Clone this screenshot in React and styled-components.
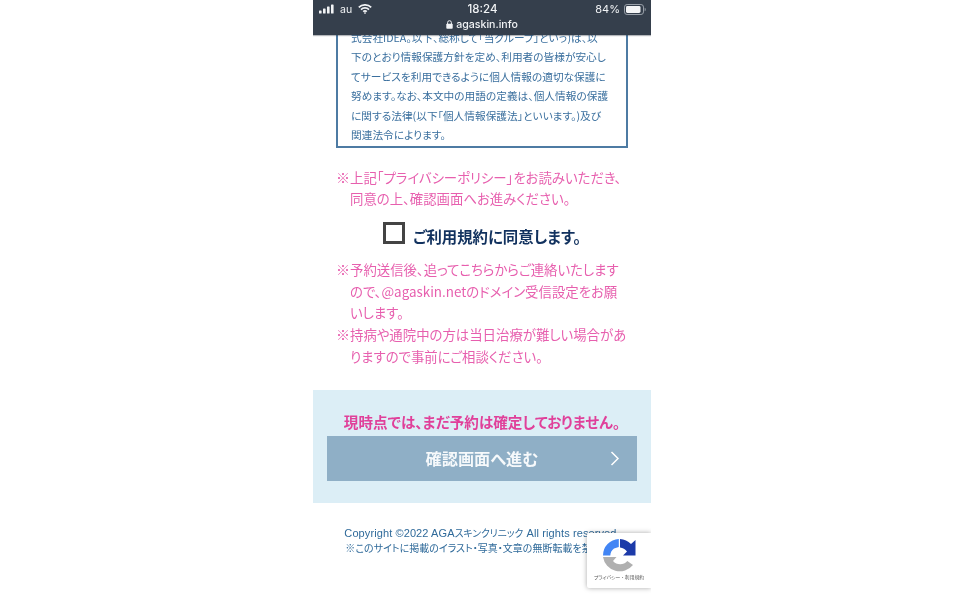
import React from "react";
import styled, { createGlobalStyle } from "styled-components";

const GlobalStyle = createGlobalStyle`
  html, body {
    margin: 0;
    padding: 0;
    background: #fff;
  }
  body {
    font-family: "Noto Sans CJK JP", "Liberation Sans", sans-serif;
  }
`;

const Page = styled.div`
  display: flex;
  justify-content: center;
  height: 600px;
  overflow: hidden;
`;

const Phone = styled.div`
  position: relative;
  width: 338px;
  height: 600px;
  overflow: hidden;
  background: #fff;
  filter: blur(0.3px);
  font-feature-settings: "palt";
`;

const StatusBar = styled.div`
  position: absolute;
  top: 0;
  left: 0;
  right: 0;
  height: 35px;
  background: #353f4c;
  color: #f1f3f5;
  font-family: "Inter", "Liberation Sans", sans-serif;
  box-shadow: 0 1px 1px rgba(40, 50, 60, 0.35);
`;

const StatusTop = styled.div`
  display: grid;
  grid-template-columns: 1fr auto 1fr;
  align-items: center;
  height: 18px;
  padding: 0 5px 0 6px;
`;

const StatusLeft = styled.div`
  display: flex;
  align-items: center;
  gap: 6px;
  font-size: 10.5px;
`;

const StatusRight = styled.div`
  display: flex;
  align-items: center;
  justify-content: flex-end;
  gap: 4px;
  font-size: 11px;
`;

const Clock = styled.div`
  font-size: 11.5px;
  font-weight: 500;
`;

const Address = styled.div`
  display: flex;
  align-items: center;
  justify-content: center;
  gap: 3px;
  height: 12px;
  font-size: 10.6px;
  font-weight: 500;
`;

const PolicyBox = styled.div`
  margin: 0 23px 0;
  height: 148px;
  box-sizing: border-box;
  padding: 27.5px 0 0 13px;
  border: 2px solid #4d7ba3;
  border-top: none;
  color: #3a6f9e;
  font-size: 10.7px;
  line-height: 19.5px;
  white-space: nowrap;
`;

const Notes = styled.div`
  margin: ${(props) => props.$top}px 0 0 23px;
  color: #e75fae;
  font-size: 13.4px;
  line-height: ${(props) => props.$line}px;
  white-space: nowrap;
`;

const Note = styled.div`
  display: flex;
`;

const Mark = styled.span`
  flex: none;
  width: 14px;
  font-size: 14px;
  font-feature-settings: normal;
`;

const AgreeRow = styled.label`
  display: flex;
  align-items: center;
  justify-content: center;
  gap: 8px;
  margin-top: 16px;
  height: 22px;
  color: #12325f;
  font-size: 15.4px;
  font-weight: 700;
`;

const CheckBox = styled.span`
  flex: none;
  align-self: flex-start;
  width: 22px;
  height: 22px;
  box-sizing: border-box;
  border: 3px solid #444;
  margin-top: -3px;
`;

const ConfirmPanel = styled.div`
  margin-top: 22px;
  height: 113px;
  box-sizing: border-box;
  padding: 22px 14px 0;
  background: #dceef6;
`;

const Warning = styled.div`
  color: #e0409a;
  font-size: 14.6px;
  font-weight: 700;
  line-height: 20px;
  text-align: center;
  white-space: nowrap;
`;

const ConfirmButton = styled.div`
  position: relative;
  display: flex;
  align-items: center;
  justify-content: center;
  height: 45px;
  margin-top: 4px;
  background: #8fafc6;
  color: #f6f9fb;
  font-size: 16.2px;
  font-weight: 700;
  & > svg {
    position: absolute;
    right: 17px;
    top: 15px;
  }
`;

const Footer = styled.div`
  padding-top: 23px;
  color: #2f6a9a;
  font-family: "Liberation Sans", "Noto Sans CJK JP", sans-serif;
  font-size: 11px;
  letter-spacing: 0.1px;
  line-height: 15px;
  text-align: center;
  white-space: nowrap;
`;

const FooterKana = styled.span`
  font-size: 9.8px;
  letter-spacing: 0;
`;

const FooterNote = styled.div`
  font-size: 10px;
  letter-spacing: 0;
`;

const Badge = styled.div`
  position: absolute;
  right: 0;
  top: 533px;
  width: 64px;
  height: 55px;
  background: #fff;
  border-radius: 2px 0 0 2px;
  box-shadow: 0 0 5px rgba(0, 0, 0, 0.35);
  display: flex;
  flex-direction: column;
  align-items: center;
`;

const BadgeLogo = styled.svg`
  margin-top: 6px;
  width: 34px;
  height: 34px;
  overflow: visible;
`;

const BadgeLinks = styled.div`
  color: #555;
  font-size: 4.8px;
  line-height: 7px;
  white-space: nowrap;
`;

const Signal = () => (
  <svg width="15" height="10" viewBox="0 0 15 10" fill="#f1f3f5">
    <rect x="0" y="6.5" width="2.6" height="3" rx="0.6" />
    <rect x="4" y="4.5" width="2.6" height="5" rx="0.6" />
    <rect x="8" y="2.5" width="2.6" height="7" rx="0.6" />
    <rect x="12" y="0.5" width="2.6" height="9" rx="0.6" />
  </svg>
);

const Wifi = () => (
  <svg width="14" height="10" viewBox="0 0 14 10" fill="none" stroke="#f1f3f5" strokeWidth="1.7">
    <path d="M0.8 3.4a8.8 8.8 0 0 1 12.4 0" />
    <path d="M3 5.6a5.7 5.7 0 0 1 8 0" />
    <path d="M5.2 7.7a2.6 2.6 0 0 1 3.6 0" />
    <circle cx="7" cy="9" r="0.6" fill="#f1f3f5" strokeWidth="0.6" />
  </svg>
);

const Battery = () => (
  <svg width="22" height="11" viewBox="0 0 22 11">
    <rect x="0.5" y="0.5" width="19" height="10" rx="2.6" fill="none" stroke="#9aa1aa" />
    <rect x="2" y="2" width="14.5" height="7" rx="1.4" fill="#f4f5f6" />
    <path d="M20.7 3.8c.8.3 1 1 1 1.7s-.2 1.4-1 1.7z" fill="#9aa1aa" />
  </svg>
);

const Lock = () => (
  <svg width="7" height="9" viewBox="0 0 7 9">
    <path d="M1.6 4V2.6a1.9 1.9 0 0 1 3.8 0V4" fill="none" stroke="#f1f3f5" strokeWidth="1" />
    <rect x="0.3" y="3.8" width="6.4" height="5" rx="0.8" fill="#f1f3f5" />
  </svg>
);

const Chevron = () => (
  <svg width="10" height="15" viewBox="0 0 10 15" fill="none" stroke="#fff" strokeWidth="1.5">
    <path d="M1.5 1l6.5 6.5L1.5 14" />
  </svg>
);

const RecaptchaLogo = () => (
  <BadgeLogo viewBox="0 0 34 34">
    <path d="M18 0A17 17 0 0 1 29 5L33.5 1V16.5H21L25 12.5A10 10 0 0 0 18 8.5Z" fill="#1c3aa9" />
    <path d="M16.8 0A16.5 16.5 0 0 0 1 16.5H8.3A9 9 0 0 1 12 9.5L16.8 8Z" fill="#4285f4" />
    <path d="M1 18H14.5L11 22A9.5 9.5 0 0 0 25.3 22L31 26A17 17 0 0 1 1 18Z" fill="#b0b0b0" />
  </BadgeLogo>
);

const App = () => (
  <Page>
    <GlobalStyle />
    <Phone>
      <PolicyBox>
        式会社IDEA。以下、総称して「当グループ」という)は、以
        <br />
        下のとおり情報保護方針を定め、利用者の皆様が安心し
        <br />
        てサービスを利用できるように個人情報の適切な保護に
        <br />
        努めます。なお、本文中の用語の定義は、個人情報の保護
        <br />
        に関する法律(以下「個人情報保護法」といいます。)及び
        <br />
        関連法令によります。
      </PolicyBox>

      <Notes $top={19} $line={21}>
        <Note>
          <Mark>※</Mark>
          <span>
            上記「プライバシーポリシー」をお読みいただき、
            <br />
            同意の上、確認画面へお進みください。
          </span>
        </Note>
      </Notes>

      <AgreeRow>
        <CheckBox />
        ご利用規約に同意します。
      </AgreeRow>

      <Notes $top={12} $line={21.7}>
        <Note>
          <Mark>※</Mark>
          <span>
            予約送信後、追ってこちらからご連絡いたします
            <br />
            ので、@agaskin.netのドメイン受信設定をお願
            <br />
            いします。
          </span>
        </Note>
        <Note>
          <Mark>※</Mark>
          <span>
            持病や通院中の方は当日治療が難しい場合があ
            <br />
            りますので事前にご相談ください。
          </span>
        </Note>
      </Notes>

      <ConfirmPanel>
        <Warning>現時点では、まだ予約は確定しておりません。</Warning>
        <ConfirmButton>
          確認画面へ進む
          <Chevron />
        </ConfirmButton>
      </ConfirmPanel>

      <Footer>
        Copyright ©2022 AGA<FooterKana>スキンクリニック</FooterKana> All rights reserved.
        <FooterNote>※このサイトに掲載のイラスト・写真・文章の無断転載を禁じます</FooterNote>
      </Footer>

      <StatusBar>
        <StatusTop>
          <StatusLeft>
            <Signal />
            au
            <Wifi />
          </StatusLeft>
          <Clock>18:24</Clock>
          <StatusRight>
            84%
            <Battery />
          </StatusRight>
        </StatusTop>
        <Address>
          <Lock />
          agaskin.info
        </Address>
      </StatusBar>

      <Badge>
        <RecaptchaLogo />
        <BadgeLinks>プライバシー ・ 利用規約</BadgeLinks>
      </Badge>
    </Phone>
  </Page>
);

export default App;
